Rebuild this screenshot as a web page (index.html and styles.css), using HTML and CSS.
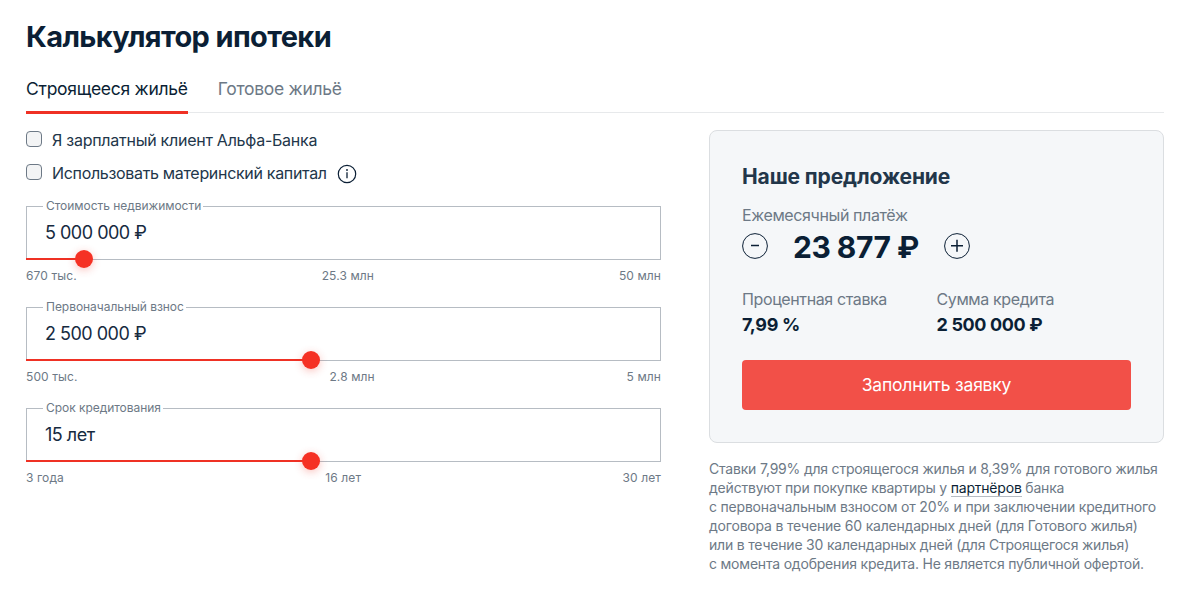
FILE: index.html
```html
<!DOCTYPE html>
<html lang="ru">
<head>
  <meta charset="UTF-8">
  <meta name="viewport" content="width=device-width, initial-scale=1.0">
  <title>Калькулятор ипотеки</title>
  <link rel="stylesheet" href="styles.css">
</head>
<body>
  <h1>Калькулятор ипотеки</h1>
  <div class="tabs">
    <a class="tab tab-active">Строящееся жильё</a>
    <a class="tab">Готовое жильё</a>
  </div>

  <div class="calculator">
    <div class="form">
      <label class="check">
        <input type="checkbox">
        <span>Я зарплатный клиент Альфа-Банка</span>
      </label>
      <label class="check">
        <input type="checkbox">
        <span class="check-capital">Использовать материнский капитал</span>
        <svg class="info" width="20" height="20" viewBox="0 0 20 20">
          <circle cx="10" cy="10" r="8.7" fill="none" stroke="#0b1f35" stroke-width="1.2"/>
          <circle cx="10" cy="6" r="0.9" fill="#0b1f35"/>
          <path d="M10 8.3v6" stroke="#0b1f35" stroke-width="1.3"/>
        </svg>
      </label>

      <div class="field">
        <fieldset>
          <legend>Стоимость недвижимости</legend>
          <div class="value">5 000 000 ₽</div>
          <div class="slider" style="width: 58px"></div>
        </fieldset>
        <div class="scale"><span>670 тыс.</span><span>25.3 млн</span><span>50 млн</span></div>
      </div>

      <div class="field">
        <fieldset>
          <legend>Первоначальный взнос</legend>
          <div class="value">2 500 000 ₽</div>
          <div class="slider" style="width: 284.5px"></div>
        </fieldset>
        <div class="scale"><span>500 тыс.</span><span>2.8 млн</span><span>5 млн</span></div>
      </div>

      <div class="field">
        <fieldset>
          <legend>Срок кредитования</legend>
          <div class="value">15 лет</div>
          <div class="slider" style="width: 284.5px"></div>
        </fieldset>
        <div class="scale"><span>3 года</span><span>16 лет</span><span>30 лет</span></div>
      </div>
    </div>

    <div class="result">
      <div class="offer">
        <h2>Наше предложение</h2>
        <div class="label">Ежемесячный платёж</div>
        <div class="payment">
          <svg width="26" height="26" viewBox="0 0 26 26">
            <circle cx="13" cy="13" r="12.4" fill="none" stroke="#0b1f35"/>
            <path d="M9 12.5h8" stroke="#0b1f35" stroke-width="1.5"/>
          </svg>
          <span class="sum">23 877 ₽</span>
          <svg width="26" height="26" viewBox="0 0 26 26">
            <circle cx="13" cy="13" r="12.4" fill="none" stroke="#0b1f35"/>
            <path d="M7 12.7h12M13 6.7v12" stroke="#0b1f35" stroke-width="1.5"/>
          </svg>
        </div>
        <div class="details">
          <div>
            <div class="label">Процентная ставка</div>
            <div class="bold">7,99 %</div>
          </div>
          <div>
            <div class="label">Сумма кредита</div>
            <div class="bold">2 500 000 ₽</div>
          </div>
        </div>
        <button>Заполнить заявку</button>
      </div>
      <p class="note">
        Ставки 7,99% для строящегося жилья и 8,39% для готового жилья<br>
        действуют при покупке квартиры у <a>партнёров</a> банка<br>
        с первоначальным взносом от 20% и при заключении кредитного<br>
        договора в течение 60 календарных дней (для Готового жилья)<br>
        или в течение 30 календарных дней (для Строящегося жилья)<br>
        с момента одобрения кредита. Не является публичной офертой.
      </p>
    </div>
  </div>
</body>
</html>
```
FILE: styles.css
```css
* {
  box-sizing: border-box;
}
body {
  margin: 0;
  padding: 16px 36px 0 26px;
  font-family: Inter, "Liberation Sans", sans-serif;
  color: #0b1f35;
  background: #fff;
}
h1 {
  margin: 0;
  font-size: 29px;
  line-height: 41px;
  font-weight: 700;
  letter-spacing: -0.62px;
}
.tabs {
  display: flex;
  gap: 30px;
  height: 56px;
  padding-top: 19px;
  border-bottom: 1px solid #e7e9eb;
}
.tab {
  height: 38px;
  padding-top: 1px;
  font-size: 17.5px;
  line-height: 24px;
  letter-spacing: -0.28px;
  color: #6d7986;
}
.tab-active {
  color: #0b1f35;
  border-bottom: 3px solid #ef3124;
}
.calculator {
  display: flex;
  justify-content: space-between;
}
.form {
  width: 635px;
  padding-top: 16px;
}
.check {
  display: flex;
  height: 33px;
  font-size: 16px;
  line-height: 22px;
  letter-spacing: -0.26px;
  color: #22364a;
}
.check-capital {
  letter-spacing: -0.32px;
}
.check input {
  appearance: none;
  width: 16px;
  height: 16px;
  margin: 2px 10px 0 0;
  border: 1px solid #6d7986;
  border-radius: 4px;
  background: #f3f4f5;
}
.info {
  margin: 2px 0 0 10px;
}
.field {
  height: 101px;
}
.field:first-of-type {
  margin-top: 3px;
}
fieldset {
  position: relative;
  height: 62px;
  margin: 0;
  padding: 0 16px;
  border: 1px solid #b6bcc3;
}
legend {
  padding: 0 2px 0 3px;
  font-size: 12px;
  line-height: 16px;
  letter-spacing: -0.04px;
  color: #6d7986;
}
.value {
  padding: 7px 0 0 2px;
  font-size: 18px;
  line-height: 24px;
  letter-spacing: -0.5px;
  color: #162a3f;
}
/* filled part of the track, lies on the bottom border */
.slider {
  position: absolute;
  left: -1px;
  bottom: -1px;
  height: 2px;
  background: #ef3124;
}
.slider::after {
  content: "";
  position: absolute;
  right: -9px;
  top: -8px;
  width: 18px;
  height: 18px;
  border-radius: 50%;
  background: #f53124;
  box-shadow: 0 2px 8px rgba(239, 49, 36, 0.3);
}
.scale {
  display: flex;
  justify-content: space-between;
  margin-top: 8px;
  font-size: 12px;
  line-height: 16px;
  letter-spacing: 0.1px;
  color: #6d7986;
}
.result {
  width: 455px;
  padding-top: 17px;
}
.offer {
  height: 313px;
  padding: 31px 32px 0;
  border: 1px solid #dbdee1;
  border-radius: 8px;
  background: #f5f7f9;
}
h2 {
  margin: 0;
  font-size: 21px;
  line-height: 30px;
  font-weight: 700;
  letter-spacing: -0.12px;
  color: #22364a;
}
.label {
  font-size: 16px;
  line-height: 24px;
  letter-spacing: -0.38px;
  color: #6d7986;
}
h2 + .label {
  margin-top: 11px;
}
.payment {
  display: flex;
  align-items: center;
  gap: 25px;
  height: 38px;
}
.sum {
  padding-top: 2px;
  font-size: 30px;
  font-weight: 700;
  letter-spacing: -0.5px;
}
.details {
  display: grid;
  grid-template-columns: 194.5px 1fr;
  margin-top: 22px;
}
.bold {
  padding-top: 1px;
  font-size: 18px;
  line-height: 26px;
  font-weight: 700;
  letter-spacing: -0.35px;
}
button {
  display: block;
  width: 389px;
  height: 50px;
  margin-top: 22px;
  padding-bottom: 3px;
  border: none;
  border-radius: 4px;
  background: #f25048;
  color: #fff;
  font-family: inherit;
  font-size: 17.5px;
  letter-spacing: -0.2px;
}
.note {
  margin: 16px 0 0;
  font-size: 14px;
  line-height: 19px;
  letter-spacing: -0.2px;
  color: #6d7986;
  white-space: nowrap;
}
.note a {
  color: #0b1f35;
  border-bottom: 1px solid #b6bcc3;
}
```
